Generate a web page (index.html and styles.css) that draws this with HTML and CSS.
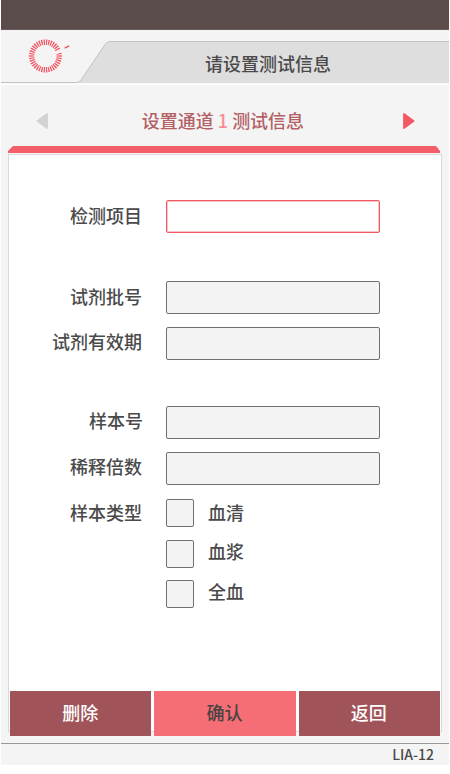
FILE: index.html
```html
<!DOCTYPE html>
<html lang="zh-CN">
<head>
<meta charset="utf-8">
<title>LIA-12</title>
<link rel="stylesheet" href="styles.css">
</head>
<body>
<div class="screen">
  <div class="statusbar"></div>
  <header class="header">
    <svg class="header-art" width="448" height="55" viewBox="1 30 448 55">
      <path d="M77 83 Q79 82.500 81 80 L105 44.500 Q107 41.500 110 41.500 H449 V83 Z" fill="#dedede"/>
      <path d="M1 82.500 H76 Q79 82.500 81 80 L105 44.500 Q107 41.500 110 41.500 H449" fill="none" stroke="#c2c2c2"/>
      <path d="M1 84.300 H449" stroke="#fff" stroke-width="1.300"/>
      <circle cx="45.400" cy="56" r="13.800" fill="none" stroke="#f4525f" stroke-width="5.400" pathLength="380" stroke-dasharray="5.500 4.500" stroke-dashoffset="2.750"/>
      <path d="M55.500 53 L62 50.100" stroke="#f4f4f4" stroke-width="3"/>
      <path d="M64.700 48.100 L69.200 45.900" stroke="#f4525f" stroke-width="1.500"/>
    </svg>
    <h1 class="header-title">请设置测试信息</h1>
  </header>
  <nav class="channel">
    <svg class="arrow" width="13" height="18" viewBox="0 0 13 18"><path d="M11 2 V16 L1.500 9 Z" fill="#d2d2d2" stroke="#d2d2d2" stroke-width="1.800" stroke-linejoin="round"/></svg>
    <h2 class="channel-title">设置通道<span class="channel-number">1</span>测试信息</h2>
    <svg class="arrow" width="13" height="18" viewBox="0 0 13 18"><path d="M2 2 V16 L11.500 9 Z" fill="#f35964" stroke="#f35964" stroke-width="1.800" stroke-linejoin="round"/></svg>
  </nav>
  <div class="accent"></div>
  <main class="card">
    <div class="row row-project"><span class="label">检测项目</span><div class="field field-active"></div></div>
    <div class="row row-lot"><span class="label">试剂批号</span><div class="field"></div></div>
    <div class="row row-expiry"><span class="label">试剂有效期</span><div class="field"></div></div>
    <div class="row row-sample"><span class="label label-wide">样本号</span><div class="field"></div></div>
    <div class="row row-dilution"><span class="label">稀释倍数</span><div class="field"></div></div>
    <div class="row row-type">
      <span class="label">样本类型</span>
      <div class="options">
        <div class="option"><span class="box"></span><span class="option-text">血清</span></div>
        <div class="option"><span class="box"></span><span class="option-text">血浆</span></div>
        <div class="option"><span class="box"></span><span class="option-text">全血</span></div>
      </div>
    </div>
  </main>
  <div class="actions">
    <div class="button">删除</div>
    <div class="button button-primary">确认</div>
    <div class="button">返回</div>
  </div>
  <footer class="footer">LIA-12</footer>
</div>
</body>
</html>
```
FILE: styles.css
```css
* { box-sizing: border-box; }

body {
  margin: 0;
  background: #fff;
  font-family: "Noto Sans CJK SC", sans-serif;
  font-size: 18px;
  font-weight: 500;
  color: #4a4a4a;
}

.screen {
  width: 448px;
  height: 765px;
  margin-left: 1px;
  background: #f4f4f4;
}

.statusbar {
  height: 30px;
  background: #594c4b;
  border-bottom: 1px solid #6b5d5d;
}

.header {
  display: grid;
  height: 55px;
}

.header-art,
.header-title { grid-area: 1 / 1; }

.header-title {
  margin: 20px 0 0 204px;
  font-size: 18px;
  font-weight: 500;
  line-height: 26px;
}

.channel {
  display: flex;
  justify-content: space-between;
  height: 60px;
  padding: 27px 34px 0 35px;
}

.channel-title {
  margin: -5px 5px 0 0;
  font-size: 18px;
  font-weight: 500;
  line-height: 26px;
  color: #b35f65;
}

.channel-number {
  margin: 0 4px;
  color: #f78d94;
}

.accent {
  height: 7px;
  margin: 1px 9px 0 7px;
  background: #f35e68;
  clip-path: polygon(5px 0, 428px 0, 432px 5px, 432px 7px, 0 7px, 0 5px);
}

.card {
  width: 434px;
  height: 578px;
  margin: 1px 0 0 7px;
  padding-top: 45px;
  background: #fff;
  border: 1px solid #d9d9d9;
}

.row {
  display: grid;
  grid-template-columns: 133px 214px;
  column-gap: 24px;
  height: 33px;
}

.label {
  line-height: 31px;
  text-align: right;
  white-space: nowrap;
}

.label-wide { margin-right: -1px; }

.field {
  border: 1px solid #707070;
  border-radius: 2px;
  background: #f3f3f3;
}

.field-active {
  border-color: #f05862;
  box-shadow: inset 0 0 0 1px #fbc4c8;
  background: #fff;
}

.row-lot { margin-top: 48px; }
.row-expiry { margin-top: 13px; }
.row-sample { margin-top: 46px; }
.row-dilution { margin-top: 13px; }
.row-type { height: 110px; margin-top: 14px; }
.row-type .label { line-height: 27px; }
.row-expiry .label,
.row-sample .label,
.row-dilution .label { line-height: 29px; }

.options {
  display: flex;
  flex-direction: column;
  justify-content: space-between;
  height: 108px;
}

.option {
  display: flex;
  gap: 14px;
  height: 27px;
}

.box {
  width: 28px;
  height: 28px;
  border: 1px solid #707070;
  border-radius: 2px;
  background: #f3f3f3;
}

.option-text { line-height: 26px; }
.option:nth-child(2) .option-text { line-height: 23px; }
.option:nth-child(3) .option-text { line-height: 22px; }

.actions {
  display: grid;
  grid-template-columns: repeat(3, 1fr);
  column-gap: 3px;
  width: 430px;
  height: 45px;
  margin: -41px 0 0 9px;
}

.button {
  display: flex;
  align-items: center;
  justify-content: center;
  height: 45px;
  padding: 0 1px 4px 0;
  background: #a05358;
  color: #fff;
}

.button-primary {
  background: #f66e75;
  color: #474343;
}

.footer {
  height: 22px;
  margin-top: 7px;
  padding-right: 15px;
  border-top: 1px solid #999;
  font-size: 14px;
  font-weight: 500;
  line-height: 21px;
  text-align: right;
}
```
